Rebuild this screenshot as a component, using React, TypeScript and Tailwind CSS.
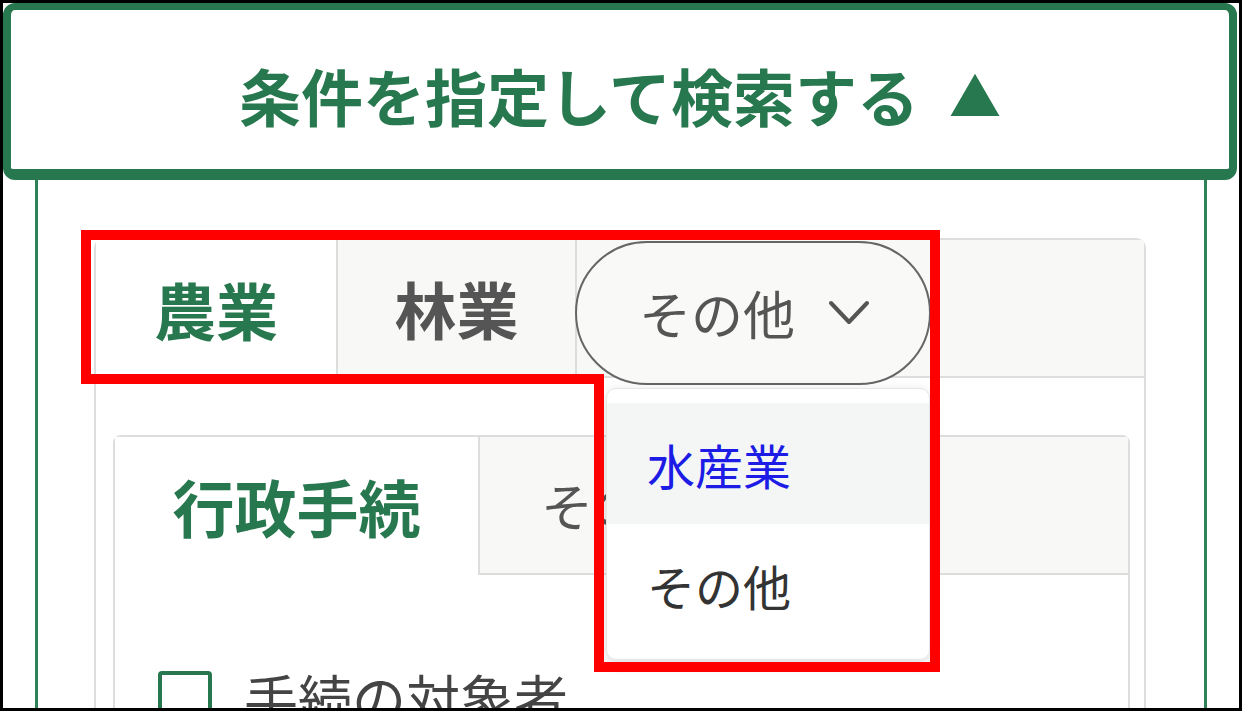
const green = 'text-[#28784f]'

function TabBar() {
  return (
    <div className="flex h-[138px]">
      <div className={`flex w-[240px] items-center justify-center bg-white text-[62px] font-bold ${green}`}>農業</div>
      <div className="flex w-[239px] items-center justify-center border-b-2 border-l-2 border-[#dddddd] bg-[#f8f8f6] text-[62px] font-bold text-[#555555]">
        林業
      </div>
      <div className="flex flex-1 items-start border-b-2 border-l-2 border-[#dddddd] bg-[#f8f8f6]">
        <div className="relative -ml-[2px] mt-px">
          <button
            type="button"
            className="flex h-[144px] w-[356px] items-center rounded-full border-2 border-[#666666] bg-[#f9f9f7] pl-[62px] text-[52px] text-[#555555]"
          >
            <span>その他</span>
            <svg width="44" height="28" viewBox="0 0 44 28" className="ml-[32px]" aria-hidden="true">
              <polyline points="4,4 22,23 40,4" fill="none" stroke="#555555" strokeWidth="4" strokeLinecap="round" strokeLinejoin="round" />
            </svg>
          </button>
          <ul className="absolute left-[31px] top-[147px] z-10 w-[324px] rounded-[10px] border border-[#e6e6e6] bg-white py-[14px] shadow-[0_4px_14px_rgba(0,0,0,0.14)]">
            <li className="flex h-[121px] items-center bg-[#f3f6f5] px-[40px] text-[48px] text-[#1c1ce6]">水産業</li>
            <li className="flex h-[121px] items-center px-[40px] text-[48px] text-[#333333]">その他</li>
          </ul>
        </div>
      </div>
    </div>
  )
}

function InnerTabs() {
  return (
    <div className="rounded-t-[8px] border-2 border-b-0 border-[#dddddd]">
      <div className="flex h-[138px]">
        <div className={`flex w-[363px] items-center justify-center bg-white text-[62px] font-bold ${green}`}>行政手続</div>
        <div className="flex w-[280px] items-center justify-center border-b-2 border-l-2 border-[#dddddd] bg-[#f8f8f6] text-[52px] text-[#555555]">
          その他
        </div>
        <div className="flex-1 border-b-2 border-[#dddddd] bg-[#f8f8f6]" />
      </div>
      <label className="flex items-center pl-[43px] pt-[96px]">
        <span className="h-[54px] w-[54px] shrink-0 rounded-[4px] border-[4px] border-[#28784f] bg-white" />
        <span className="ml-[32px] text-[54px] leading-none text-[#444444]">手続の対象者</span>
      </label>
    </div>
  )
}

export default function App() {
  return (
    <div className="relative flex h-[711px] w-[1242px] flex-col overflow-hidden border-[3px] border-black bg-white font-['Noto_Sans_CJK_JP','Noto_Sans',sans-serif]">
      <button
        type="button"
        className="flex h-[177px] w-[1234px] shrink-0 items-center justify-center rounded-[12px] border-x-[8px] border-b-[11px] border-t-[7px] border-[#28784f] bg-white pt-[10px]"
      >
        <span className={`text-[62px] font-bold leading-none ${green}`}>条件を指定して検索する</span>
        <span className={`ml-[30px] text-[52px] leading-none ${green}`}>▲</span>
      </button>

      <div className="mx-[32px] flex-1 border-x-[3px] border-[#2f8157] pl-[56px] pr-[58px] pt-[58px]">
        <div className="rounded-t-[10px] border-2 border-b-0 border-[#dddddd]">
          <TabBar />
          <div className="pl-[17px] pr-[14px] pt-[57px]">
            <InnerTabs />
          </div>
        </div>
      </div>

      <svg
        className="pointer-events-none absolute -left-[3px] -top-[3px] z-20"
        width="1242"
        height="711"
        viewBox="0 0 1242 711"
        aria-hidden="true"
      >
        <path d="M86 235 H935 V667 H599 V379 H86 Z" fill="none" stroke="#ff0000" strokeWidth="10" strokeLinejoin="miter" />
      </svg>
    </div>
  )
}
